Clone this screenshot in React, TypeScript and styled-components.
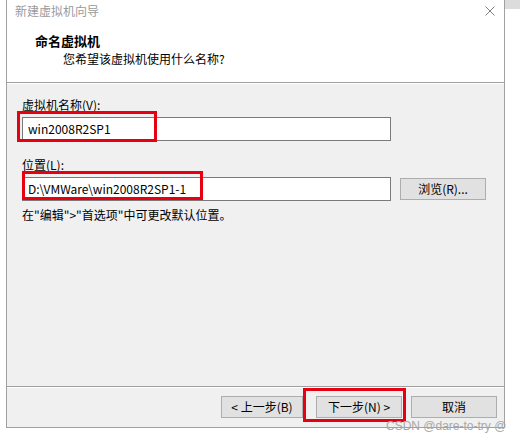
import React from "react";
import styled, { createGlobalStyle } from "styled-components";

const GlobalStyle = createGlobalStyle`
  html, body {
    margin: 0;
    padding: 0;
    background: #ffffff;
  }
  body {
    font-family: "Noto Sans CJK SC", "Noto Sans", sans-serif;
    font-size: 12px;
    color: #000;
  }
  * { box-sizing: border-box; }
`;

const Page = styled.div`
  position: relative;
  width: 520px;
  height: 443px;
  display: flex;
  align-items: flex-start;
  overflow: hidden;
`;

const Window = styled.div`
  margin-left: 6px;
  width: 499px;
  height: 428px;
  border: 1px solid #a0a0a0;
  border-top: none;
  background: #ffffff;
  display: flex;
  flex-direction: column;
`;

const BehindWindow = styled.div`
  width: 15px;
  height: 9px;
  background: #dcdcdc;
`;

const TitleBar = styled.div`
  height: 26px;
  display: flex;
  align-items: center;
  justify-content: space-between;
  padding: 0 9px 4px 8px;
`;

const TitleText = styled.span`
  color: #9a9a9a;
  font-size: 12px;
  line-height: 16px;
`;

const CloseIcon = styled.svg`
  width: 10px;
  height: 10px;
  display: block;
`;

const Header = styled.div`
  height: 57px;
  padding: 7px 0 0 28px;
  border-bottom: 1px solid #a0a0a0;
  display: flex;
  flex-direction: column;
  gap: 2px;
`;

const HeaderTitle = styled.div`
  font-weight: 700;
  font-size: 13px;
  line-height: 16px;
`;

const HeaderSub = styled.div`
  padding-left: 28px;
  font-size: 12px;
  line-height: 16px;
`;

const Body = styled.div`
  flex: 1;
  background: #f0f0f0;
  border-top: 1px solid #ffffff;
  padding: 13px 0 0 15px;
  display: flex;
  flex-direction: column;
`;

const Label = styled.div<{ $mt?: number }>`
  line-height: 16px;
  margin-top: ${(p) => p.$mt ?? 0}px;
`;

const FieldRow = styled.div`
  display: flex;
  align-items: center;
  margin-top: 4px;
`;

const TextBox = styled.div`
  width: 369px;
  height: 24px;
  background: #ffffff;
  border: 1px solid #7a7a7a;
  padding-left: 5px;
  display: flex;
  align-items: center;
  line-height: 16px;
`;

const Button = styled.div<{ $w?: number }>`
  width: ${(p) => p.$w ?? 86}px;
  height: 22px;
  background: #e1e1e1;
  border: 1px solid #adadad;
  display: flex;
  align-items: center;
  justify-content: center;
  line-height: 16px;
`;

const BrowseButton = styled(Button)`
  margin-left: 9px;
`;

const Hint = styled.div`
  margin-top: 6px;
  line-height: 16px;
`;

const Footer = styled.div`
  height: 41px;
  background: #f0f0f0;
  border-top: 1px solid #a0a0a0;
  box-shadow: inset 0 1px 0 #ffffff;
  padding: 9px 7px 0 0;
  display: flex;
  justify-content: flex-end;
  gap: 9px;
`;

const BackButton = styled(Button)`
  margin-right: 4px;
`;

const Annotation = styled.div<{ $x: number; $y: number; $w: number; $h: number }>`
  position: absolute;
  left: ${(p) => p.$x}px;
  top: ${(p) => p.$y}px;
  width: ${(p) => p.$w}px;
  height: ${(p) => p.$h}px;
  border: 3px solid #e60012;
  pointer-events: none;
`;

const Watermark = styled.div`
  position: absolute;
  left: 386px;
  top: 419px;
  font-family: "Liberation Sans", Arial, sans-serif;
  font-size: 12px;
  line-height: 14px;
  color: #a8a8a8;
  white-space: nowrap;
`;

export default function App() {
  return (
    <>
      <GlobalStyle />
      <Page>
        <Window>
          <TitleBar>
            <TitleText>新建虚拟机向导</TitleText>
            <CloseIcon viewBox="0 0 10 10">
              <path d="M0.5 0.5 L9.5 9.5 M9.5 0.5 L0.5 9.5" stroke="#808080" strokeWidth="1" fill="none" />
            </CloseIcon>
          </TitleBar>
          <Header>
            <HeaderTitle>命名虚拟机</HeaderTitle>
            <HeaderSub>您希望该虚拟机使用什么名称?</HeaderSub>
          </Header>
          <Body>
            <Label>虚拟机名称(V):</Label>
            <FieldRow>
              <TextBox>win2008R2SP1</TextBox>
            </FieldRow>
            <Label $mt={16}>位置(L):</Label>
            <FieldRow>
              <TextBox>D:\VMWare\win2008R2SP1-1</TextBox>
              <BrowseButton>浏览(R)...</BrowseButton>
            </FieldRow>
            <Hint>在"编辑"&gt;"首选项"中可更改默认位置。</Hint>
          </Body>
          <Footer>
            <BackButton $w={82}>&lt; 上一步(B)</BackButton>
            <Button>下一步(N) &gt;</Button>
            <Button>取消</Button>
          </Footer>
        </Window>
        <BehindWindow />
        <Annotation $x={17} $y={111} $w={140} $h={31} />
        <Annotation $x={22} $y={171} $w={181} $h={29} />
        <Annotation $x={303} $y={388} $w={103} $h={34} />
        <Watermark>CSDN @dare-to-try @</Watermark>
      </Page>
    </>
  );
}
